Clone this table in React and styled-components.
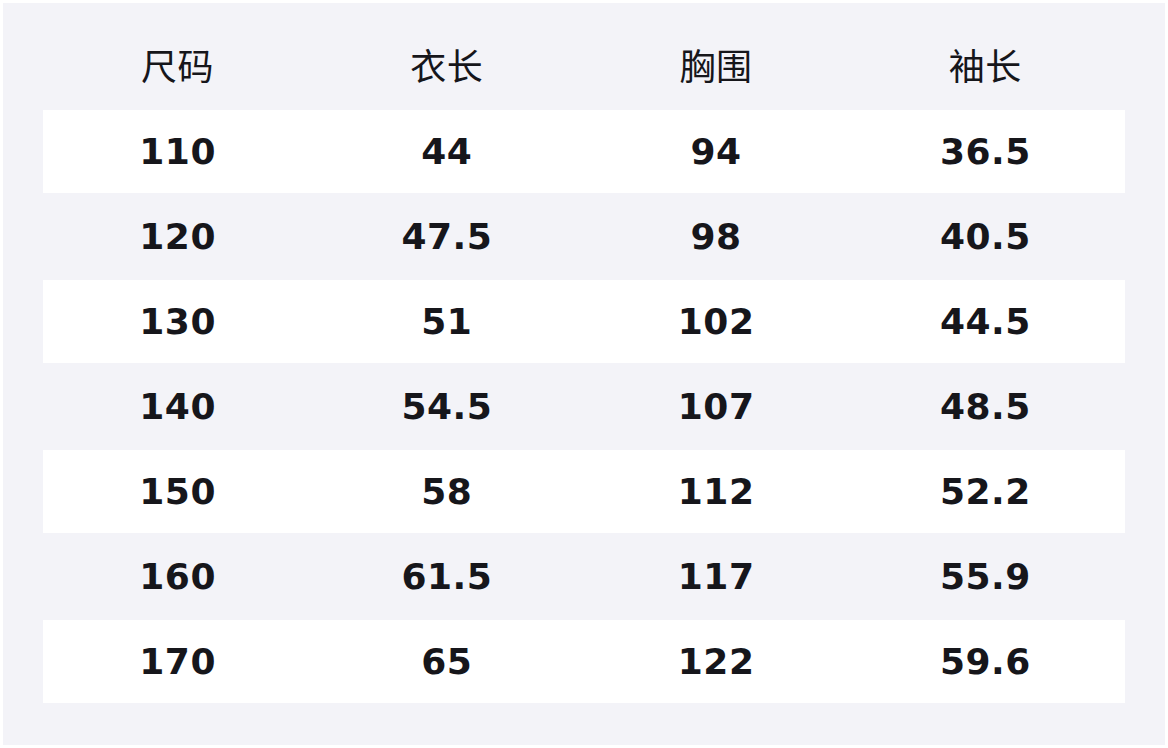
import styled, { createGlobalStyle } from 'styled-components'

const GlobalStyle = createGlobalStyle`
  html, body {
    margin: 0;
    padding: 0;
    background: #ffffff;
  }
  body {
    font-family: "DejaVu Sans", "Noto Sans CJK SC", sans-serif;
  }
`;

const Page = styled.div`
  padding: 3px;
  width: 1168px;
  box-sizing: border-box;
`;

const Panel = styled.div`
  background: #f3f3f8;
  padding: 22px 40px 40px;
  height: 742px;
  box-sizing: border-box;
  display: flex;
  flex-direction: column;
  gap: 2px;
`;

const Row = styled.div`
  display: grid;
  grid-template-columns: repeat(4, 1fr);
  height: 83px;
  box-sizing: border-box;
  padding: 0 5px ${p => (p.$head ? '6px' : '0')} 0;
  align-items: center;
  background: ${p => (p.$white ? '#ffffff' : 'transparent')};
`;

const Cell = styled.div`
  text-align: center;
  color: #16161b;
  font-size: 36px;
  letter-spacing: 0.5px;
  font-weight: ${p => (p.$head ? 400 : 700)};
`;

const headers = ['尺码', '衣长', '胸围', '袖长'];

const sizes = [
  ['110', '44', '94', '36.5'],
  ['120', '47.5', '98', '40.5'],
  ['130', '51', '102', '44.5'],
  ['140', '54.5', '107', '48.5'],
  ['150', '58', '112', '52.2'],
  ['160', '61.5', '117', '55.9'],
  ['170', '65', '122', '59.6'],
];

function App() {
  return (
    <>
      <GlobalStyle />
      <Page>
        <Panel>
          <Row $head>
            {headers.map(h => (
              <Cell $head key={h}>{h}</Cell>
            ))}
          </Row>
          {sizes.map((r, i) => (
            <Row $white={i % 2 === 0} key={r[0]}>
              {r.map((v, j) => (
                <Cell key={j}>{v}</Cell>
              ))}
            </Row>
          ))}
        </Panel>
      </Page>
    </>
  )
}

export default App;
